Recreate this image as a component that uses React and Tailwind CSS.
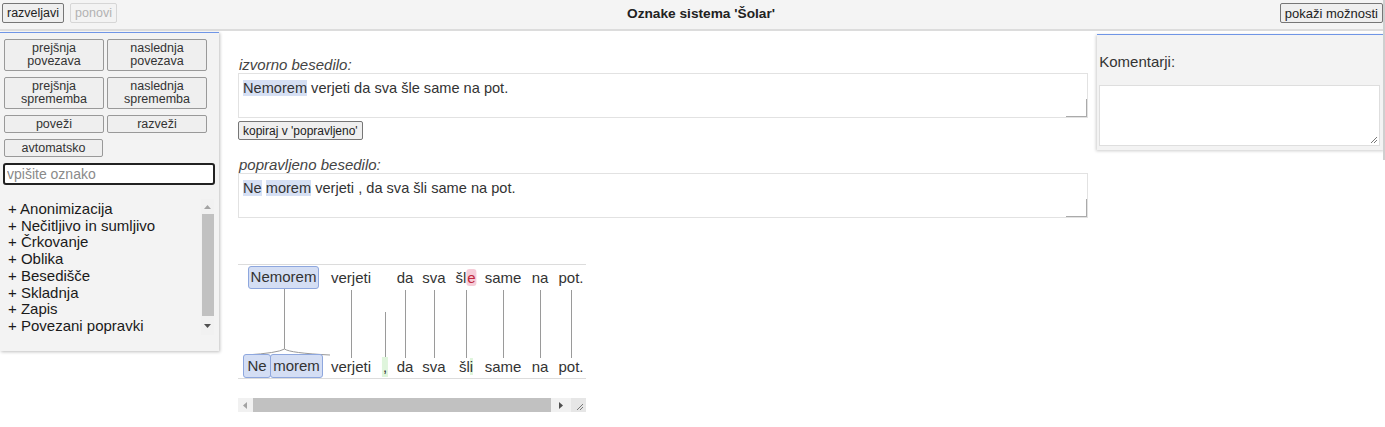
import { useState } from 'react';

const font = { fontFamily: '"Liberation Sans", Arial, sans-serif' };

const tags = [
  'Anonimizacija',
  'Nečitljivo in sumljivo',
  'Črkovanje',
  'Oblika',
  'Besedišče',
  'Skladnja',
  'Zapis',
  'Povezani popravki',
];

function PanelButton({ children, className = '' }) {
  return (
    <button className={`bg-[#efefef] border border-[#999] rounded-[2px] text-[12.5px] leading-[13px] text-[#333] ${className}`}>
      {children}
    </button>
  );
}

function ResizeCorner() {
  return (
    <div className="absolute right-0 bottom-0 w-[21px] h-[18px] border-r border-b border-[#aaa]" />
  );
}

function TextBox({ children }) {
  return (
    <div className="relative h-[45px] bg-white border border-[#e2e2e2] px-[4px] pt-[4px] text-[14.6px] leading-[20px] text-[#333]">
      {children}
      <ResizeCorner />
    </div>
  );
}

function Hl({ children, className = 'bg-[#d6e0f4]' }) {
  return <span className={className}>{children}</span>;
}

// diagram token centres (relative to diagram left)
const tokens = [
  { t: 'verjeti', x: 113 },
  { t: 'da', x: 167 },
  { t: 'sva', x: 196 },
  { t: 'same', x: 265 },
  { t: 'na', x: 302 },
  { t: 'pot.', x: 333 },
];
const lines = [113, 167, 196, 228, 265, 302, 333];

function Diagram() {
  return (
    <div className="w-[348px]">
      <div className="relative h-[115px] border-t border-b border-[#dcdcdc] text-[15px] text-[#333]">
        <svg className="absolute inset-0" width="348" height="115">
          <g stroke="#9a9a9a" strokeWidth="1" fill="none">
            <line x1="46.5" y1="24" x2="46.5" y2="84" />
            <path d="M46.5 84 Q40 88 8 90" />
            <path d="M46.5 84 Q52 88 92 90" />
            {lines.map((x) => (
              <line key={x} x1={x + 0.5} y1="25" x2={x + 0.5} y2="93" />
            ))}
            <line x1="147.5" y1="47" x2="147.5" y2="93" />
          </g>
        </svg>
        <div className="absolute left-[10px] top-[1px] w-[71px] h-[23px] flex items-center justify-center bg-[#d4def4] border border-[#8ea7de] rounded-[3px]">
          Nemorem
        </div>
        {tokens.map((k) => (
          <span key={k.t} className="absolute top-[3px] -translate-x-1/2 leading-[20px]" style={{ left: k.x }}>
            {k.t}
          </span>
        ))}
        <span className="absolute top-[3px] -translate-x-1/2 leading-[20px]" style={{ left: 228 }}>
          šl<span className="bg-[#f6cdd8] text-[#c0283e] rounded-[3px] px-[1px]">e</span>
        </span>

        <div className="absolute left-[5px] top-[89px] w-[28px] h-[24px] flex items-center justify-center bg-[#d4def4] border border-[#8ea7de] rounded-[3px]">
          Ne
        </div>
        <div className="absolute left-[32px] top-[89px] w-[53px] h-[24px] flex items-center justify-center bg-[#d4def4] border border-[#8ea7de] rounded-[3px]">
          morem
        </div>
        {tokens.map((k) => (
          <span key={k.t} className="absolute top-[92px] -translate-x-1/2 leading-[20px]" style={{ left: k.x }}>
            {k.t}
          </span>
        ))}
        <span className="absolute top-[92px] -translate-x-1/2 leading-[20px] bg-[#dff5dc] px-[1px]" style={{ left: 147 }}>
          ,
        </span>
        <span className="absolute top-[92px] -translate-x-1/2 leading-[20px]" style={{ left: 228 }}>
          šl<span className="bg-[#dff5dc]">i</span>
        </span>
      </div>
      {/* horizontal scrollbar */}
      <div className="mt-[19px] h-[14px] flex items-stretch bg-[#f1f1f1]">
        <div className="w-[15px] flex items-center justify-center">
          <svg width="5" height="7"><path d="M4 0 L0 3.5 L4 7 Z" fill="#a3a3a3" /></svg>
        </div>
        <div className="w-[298px] bg-[#c1c1c1]" />
        <div className="w-[20px] flex items-center justify-center">
          <svg width="5" height="7"><path d="M0 0 L4 3.5 L0 7 Z" fill="#505050" /></svg>
        </div>
        <div className="flex-1 bg-[#e6e6e6] flex items-end justify-end pr-[2px] pb-[1px]">
          <svg width="8" height="8"><g stroke="#777" strokeWidth="1"><line x1="7" y1="1" x2="1" y2="7" /><line x1="7" y1="4" x2="4" y2="7" /></g></svg>
        </div>
      </div>
    </div>
  );
}

export default function App() {
  const [tag, setTag] = useState('');
  return (
    <div className="w-[1385px] h-[427px] bg-white overflow-hidden relative" style={font}>
      {/* top bar */}
      <div className="h-[31px] bg-[#f4f4f4] border-b-[2px] border-[#dcdcdc] flex items-start pt-[3px] px-[2px] relative">
        <button className="h-[20px] px-[4px] bg-[#efefef] border border-[#767676] rounded-[2px] text-[12.5px] text-[#222]">razveljavi</button>
        <button className="ml-[6px] h-[20px] px-[4px] bg-[#f3f3f3] border border-[#d6d6d6] rounded-[2px] text-[12.5px] text-[#b2b2b2]">ponovi</button>
        <div className="absolute left-0 right-0 top-[4px] text-center text-[13.7px] font-bold text-[#222] pointer-events-none pl-[17px]">
          Oznake sistema 'Šolar'
        </div>
        <button className="ml-auto h-[20px] px-[4px] bg-[#efefef] border border-[#767676] rounded-[2px] text-[13px] text-[#222]">pokaži možnosti</button>
      </div>

      <div className="flex items-start">
        {/* left panel */}
        <div className="w-[219px] mt-[1px] bg-[#f3f3f3] border-t border-[#6f95e6] shadow-[1px_1px_3px_rgba(0,0,0,0.25)] pl-[4px] pr-[4px] pt-[6px] pb-[16px]">
          <div className="grid grid-cols-[100px_100px] gap-x-[3px] gap-y-[6px]">
            <PanelButton className="h-[32px]">prejšnja<br />povezava</PanelButton>
            <PanelButton className="h-[32px]">naslednja<br />povezava</PanelButton>
            <PanelButton className="h-[32px]">prejšnja<br />sprememba</PanelButton>
            <PanelButton className="h-[32px]">naslednja<br />sprememba</PanelButton>
            <PanelButton className="h-[18px]">poveži</PanelButton>
            <PanelButton className="h-[18px]">razveži</PanelButton>
            <PanelButton className="h-[18px] w-[99px]">avtomatsko</PanelButton>
          </div>
          <input
            value={tag}
            onChange={(e) => setTag(e.target.value)}
            placeholder="vpišite oznako"
            className="mt-[6px] -ml-[1px] w-[212px] h-[22px] bg-white border-[2px] border-[#222] rounded-[3px] px-[2px] text-[14px] text-[#333] placeholder:text-[#8a8a8a] outline-none"
          />
          <div className="mt-[13px] flex">
            <div className="flex-1 pl-[4px] pt-[2px] text-[15px] leading-[16.7px] text-[#1a1a1a]">
              {tags.map((t) => (
                <div key={t}>+ {t}</div>
              ))}
            </div>
            <div className="w-[13px] h-[136px] mr-[1px] bg-[#f1f1f1] flex flex-col items-center">
              <div className="h-[15px] flex items-center">
                <svg width="7" height="4"><path d="M0 4 L3.5 0 L7 4 Z" fill="#a3a3a3" /></svg>
              </div>
              <div className="w-[12px] h-[102px] bg-[#c1c1c1]" />
              <div className="flex-1 flex items-center">
                <svg width="7" height="4"><path d="M0 0 L3.5 4 L7 0 Z" fill="#505050" /></svg>
              </div>
            </div>
          </div>
        </div>

        {/* middle */}
        <div className="ml-[19px] w-[851px] pt-[25px]">
          <div className="italic text-[15px] leading-[17px] text-[#444] pl-[1px]">izvorno besedilo:</div>
          <TextBox>
            <Hl>Nemorem</Hl> verjeti da sva šle same na pot.
          </TextBox>
          <button className="mt-[1px] h-[19px] px-[4px] bg-[#efefef] border border-[#767676] rounded-[2px] text-[12px] text-[#222]">
            kopiraj v 'popravljeno'
          </button>
          <div className="mt-[14px] italic text-[15px] leading-[17px] text-[#444] pl-[1px]">popravljeno besedilo:</div>
          <TextBox>
            <Hl>Ne</Hl> <Hl>morem</Hl> verjeti , da sva šli same na pot.
          </TextBox>
          <div className="mt-[46px]">
            <Diagram />
          </div>
        </div>

        {/* right panel */}
        <div className="ml-[9px] w-[288px] mt-[3px] bg-[#f3f3f3] border-t border-[#6f95e6] shadow-[-1px_1px_3px_rgba(0,0,0,0.2)] pl-[2px] pr-[5px] pt-[18px] pb-[4px]">
          <div className="text-[15px] leading-[17px] text-[#333]">Komentarji:</div>
          <div className="relative mt-[15px] h-[61px] bg-white border border-[#dedede]">
            <svg className="absolute right-[1px] bottom-[1px]" width="8" height="8"><g stroke="#777" strokeWidth="1"><line x1="7" y1="1" x2="1" y2="7" /><line x1="7" y1="4" x2="4" y2="7" /></g></svg>
          </div>
        </div>
      </div>
      <div className="absolute right-0 top-0 w-[2px] h-[160px] bg-[#cfcfcf]" />
    </div>
  );
}
